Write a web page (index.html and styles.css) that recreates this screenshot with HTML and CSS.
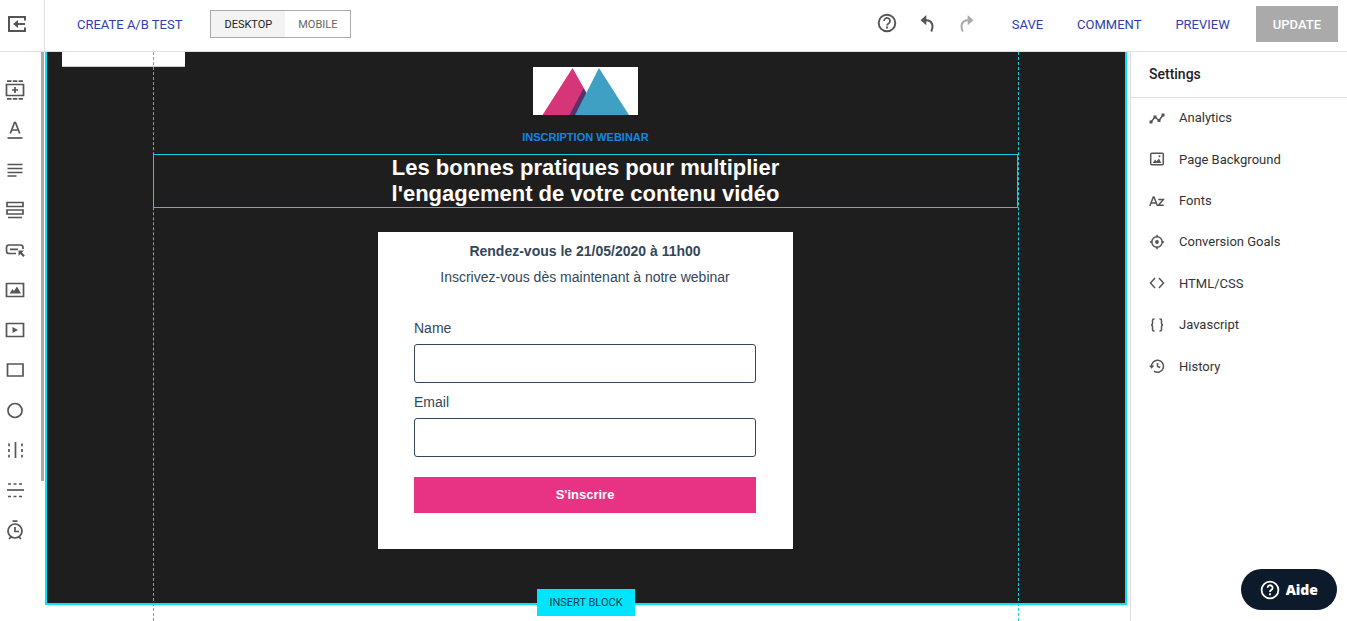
FILE: index.html
```html
<!DOCTYPE html>
<html lang="fr">
<head>
<meta charset="utf-8">
<title>Page editor</title>
<link rel="stylesheet" href="styles.css">
</head>
<body>
<div class="app">
  <header class="topbar">
    <button class="exit" aria-label="Exit">
      <svg width="20" height="18" viewBox="0 0 20 18" fill="none" stroke="#555" stroke-width="2"><path d="M18 5.500V2H2v14h16v-3.500M18 9H8"/><path d="M11 5v8L6 9z" fill="#555" stroke="none"/></svg>
    </button>
    <a class="link ab" href="#">CREATE A/B TEST</a>
    <div class="toggle">
      <button class="toggle-btn active">DESKTOP</button>
      <button class="toggle-btn">MOBILE</button>
    </div>
    <div class="tools">
      <button class="tool" aria-label="Help"><svg width="20" height="20" viewBox="0 0 20 20" fill="none" stroke="#555" stroke-width="1.900"><circle cx="10" cy="10" r="8.300"/><path d="M7 8a3 3 0 1 1 4.600 2.500C10.500 11.200 10 11.600 10 12.500" stroke-width="1.700"/><path d="M10 13.600v1.900" stroke-width="1.900"/></svg></button>
      <button class="tool" aria-label="Undo"><svg width="20" height="20" viewBox="0 0 20 20"><path d="M3.500 7.200L9.300 2v10.200z" fill="#555"/><path d="M8 7.200h1.600c5 0 7.600 5 4.600 11.300" fill="none" stroke="#555" stroke-width="2"/></svg></button>
      <button class="tool" aria-label="Redo"><svg width="20" height="20" viewBox="0 0 20 20"><path d="M16.500 7.200L10.700 2v10.200z" fill="#aaa"/><path d="M12 7.200h-1.600c-5 0-7.600 5-4.600 11.300" fill="none" stroke="#aaa" stroke-width="2"/></svg></button>
    </div>
    <button class="link action">SAVE</button>
    <button class="link action">COMMENT</button>
    <button class="link action">PREVIEW</button>
    <button class="update">UPDATE</button>
  </header>

  <div class="body">
    <nav class="rail" aria-label="Elements">
      <button class="rail-btn" aria-label="Block"><svg viewBox="0 0 20 20"><path d="M1.500 4.500h17v11h-17z"/><path d="M10 7v6M7 10h6"/><path d="M2 1.200h16M2 18.800h16" stroke-dasharray="4.500 1.300"/></svg></button>
      <button class="rail-btn" aria-label="Headline"><svg viewBox="0 0 20 20"><path d="M5.300 13.500L9.500 2.500h1l4.200 11M6.800 10h6.400"/><path d="M2.500 18h15"/></svg></button>
      <button class="rail-btn" aria-label="Text"><svg viewBox="0 0 20 20"><path d="M2.500 4.500h15M2.500 8.500h15M2.500 12.500h15M2.500 16h9"/></svg></button>
      <button class="rail-btn" aria-label="Form"><svg viewBox="0 0 20 20"><path d="M2 2.500h16v4H2zM2 10h16v4H2zM3 17.500h14"/></svg></button>
      <button class="rail-btn" aria-label="Button"><svg viewBox="0 0 20 20"><path d="M11 13.500H4q-2.500 0-2.500-2.500V7.500Q1.500 5 4 5h11.500Q18 5 18 7.500V9M5 9.300h8"/><path d="M13.500 10.500h5.500l-2.100 2.100 2.900 2.900-1.500 1.500-2.900-2.900-1.900 1.900z" class="solid"/></svg></button>
      <button class="rail-btn" aria-label="Image"><svg viewBox="0 0 20 20"><path d="M1.500 3.500h17v13h-17z"/><path d="M4.500 13.500l3-4.500 1.500 2 3-4.500 4 7z" class="solid"/></svg></button>
      <button class="rail-btn" aria-label="Video"><svg viewBox="0 0 20 20"><path d="M1.500 3.500h17v13h-17z"/><path d="M7.500 7l5.500 3-5.500 3z" class="solid"/></svg></button>
      <button class="rail-btn" aria-label="Box"><svg viewBox="0 0 20 20"><path d="M2.500 4h15.500v12H2.500z"/></svg></button>
      <button class="rail-btn" aria-label="Circle"><svg viewBox="0 0 20 20"><circle cx="10" cy="10.500" r="7"/></svg></button>
      <button class="rail-btn" aria-label="Vertical line"><svg viewBox="0 0 20 20"><path d="M10.500 2v16"/><path d="M4 3.500v14M17 3.500v14" stroke-dasharray="2.800 2.800"/></svg></button>
      <button class="rail-btn" aria-label="Horizontal line"><svg viewBox="0 0 20 20"><path d="M2 10h17"/><path d="M3 4h15M3 16.500h15" stroke-dasharray="3 2.500"/></svg></button>
      <button class="rail-btn" aria-label="Timer"><svg viewBox="0 0 20 20"><circle cx="10" cy="11" r="7"/><path d="M7.500 1.200h5M10 7v4.500h4M4 19l2-2M16 19l-2-2"/></svg></button>
      <span class="rail-scroll"></span>
    </nav>

    <main class="canvas">
      <section class="block">
        <div class="column">
          <svg class="logo" width="105" height="48" viewBox="0 0 105 48"><path d="M0 0h105v48H0z" fill="#fff"/><path d="M9.500 48L39.500 1 66 48z" fill="#d63678"/><path d="M50.500 21.500L36.500 48H48l9-15.500z" fill="#583168"/><path d="M42 48L66 1l30 47z" fill="#40a0c4"/></svg>
          <p class="kicker">INSCRIPTION WEBINAR</p>
          <h1 class="headline">Les bonnes pratiques pour multiplier<br>l'engagement de votre contenu vidéo</h1>
          <form class="card">
            <p class="date">Rendez-vous le 21/05/2020 à 11h00</p>
            <p class="intro">Inscrivez-vous dès maintenant à notre webinar</p>
            <label class="label" for="name">Name</label>
            <input class="field" id="name" type="text">
            <label class="label" for="email">Email</label>
            <input class="field" id="email" type="email">
            <button class="submit" type="button">S'inscrire</button>
          </form>
        </div>
        <button class="insert">INSERT BLOCK</button>
      </section>
      <span class="tab"></span>
      <div class="guides"><span class="guide-lines"></span></div>
    </main>

    <aside class="settings">
      <h2 class="settings-title">Settings</h2>
      <ul class="settings-list">
        <li><a class="item" href="#"><svg viewBox="0 0 16 16"><path d="M2 12l4-5 4 3.500L14 5"/><path d="M.5 10.500h3v3h-3zM4.500 5.500h3v3h-3zM8.500 9h3v3h-3zM12.500 3.500h3v3h-3z" class="solid"/></svg>Analytics</a></li>
        <li><a class="item" href="#"><svg viewBox="0 0 16 16"><rect x="1.700" y="2.200" width="12.600" height="11.600" rx="1"/><path d="M3.800 12l2.200-3.500 1.500 1.700L10 7.500l2.200 4.500z" class="solid"/><circle cx="10.500" cy="5.300" r="1" class="solid"/></svg>Page Background</a></li>
        <li><a class="item" href="#"><svg viewBox="0 0 16 16"><path d="M.8 13L4.300 4h.7l3.500 9M2.300 10H7M9.300 6.500h5L9.500 12.300h5.300"/></svg>Fonts</a></li>
        <li><a class="item" href="#"><svg viewBox="0 0 16 16"><circle cx="8" cy="8" r="5.200"/><circle cx="8" cy="8" r="1.900" class="solid"/><path d="M8 .8v2.500M8 12.700v2.500M.8 8h2.500M12.700 8h2.500"/></svg>Conversion Goals</a></li>
        <li><a class="item" href="#"><svg viewBox="0 0 16 16"><path d="M6 3L1.500 8 6 13M10 3l4.500 5-4.500 5"/></svg>HTML/CSS</a></li>
        <li><a class="item" href="#"><svg viewBox="0 0 16 16"><path d="M5.500 2H5Q3.500 2 3.500 3.500V6.500Q3.500 8 2 8Q3.500 8 3.500 9.500V12.500Q3.500 14 5 14h.5M10.500 2h.5q1.500 0 1.500 1.500v3Q12.500 8 14 8q-1.500 0-1.500 1.500v3Q12.500 14 11 14h-.5"/></svg>Javascript</a></li>
        <li><a class="item" href="#"><svg viewBox="0 0 16 16"><path d="M2.500 9A6 6 0 1 1 5 13.200M8.500 5v3.500l2.700 1"/><path d="M0 7.500h5.300L2.600 10.800z" class="solid"/></svg>History</a></li>
      </ul>
    </aside>
  </div>
  <button class="help"><svg width="20" height="20" viewBox="0 0 20 20" fill="none" stroke="#fff" stroke-width="1.800"><circle cx="10" cy="10" r="8.400"/><path d="M7.600 7.700a2.500 2.500 0 1 1 3.800 2.200Q10 10.700 10 12"/><path d="M10 13.300v2"/></svg>Aide</button>
</div>
</body>
</html>
```
FILE: styles.css
```css
* { box-sizing: border-box; }
body { margin: 0; background: #fff; font-family: Roboto, "Liberation Sans", sans-serif; overflow: hidden; }
button { border: 0; background: none; padding: 0; font: inherit; cursor: pointer; }
a { text-decoration: none; }
svg { display: block; }
p, h1, h2, ul { margin: 0; padding: 0; }

.app { display: flex; flex-direction: column; min-height: 100vh; }

.topbar { display: flex; align-items: center; height: 52px; padding-right: 9px; border-bottom: 1px solid #e0e0e0; }
.exit { display: flex; align-items: center; align-self: stretch; width: 45px; padding: 0 0 3px 7px; border-right: 1px solid #e0e0e0; }
.link { padding-bottom: 2px; color: #2f40ac; font-size: 13px; line-height: 20px; }
.ab { margin-left: 32px; }
.toggle { display: flex; height: 28px; margin: 0 auto 3px 28px; border: 1px solid #aaa; }
.toggle-btn { padding: 0 13px; font-size: 11px; color: #666; }
.toggle-btn.active { background: #f3f3f3; color: #222; }
.tools { display: flex; margin-right: 8px; padding-bottom: 5px; }
.tool { display: flex; justify-content: center; width: 40px; }
.action { padding: 0 17px 2px; }
.update { height: 36px; margin: 0 0 3px 9px; padding: 0 17px; background: #aaa; color: #fff; font-size: 13px; font-weight: 500; }

.body { flex: 1; display: grid; grid-template-columns: 45px 1fr 217px; }

.rail { position: relative; display: flex; flex-direction: column; padding-top: 18px; }
.rail-btn { display: flex; align-items: center; justify-content: center; width: 30px; height: 40px; }
.rail-btn svg { width: 20px; height: 20px; fill: none; stroke: #555; stroke-width: 1.7; }
.solid { fill: #555; stroke: none; }
.rail-scroll { position: absolute; right: 1px; top: 0; width: 3px; height: 429px; background: #aaa; }

.canvas { position: relative; padding-right: 3px; }
.block { position: relative; padding: 15px 0 54px; border: solid #00e5ff; border-width: 0 2px 2px; background: #1e1e1e; }
.column { display: flex; flex-direction: column; align-items: center; max-width: 866px; margin: 0 auto; padding-right: 1px; }
.kicker { margin: 12px 0 7px; font: bold 11px/20px "Liberation Sans", Arial, sans-serif; color: #1187e0; }
.headline { width: 100%; border: 1px solid #17cfe0; color: #fff; text-align: center; font: bold 22px/26px "Liberation Sans", Arial, sans-serif; }
.card { display: flex; flex-direction: column; width: 415px; margin-top: 24px; padding: 6px 37px 36px 36px; background: #fff; color: #33475b; font: 14px/26px "Liberation Sans", Arial, sans-serif; }
.date { text-align: center; font-weight: bold; }
.intro { margin-bottom: 26px; text-align: center; }
.label { line-height: 24px; margin-bottom: 4px; }
.field { width: 100%; height: 39px; margin-bottom: 7px; padding: 0 10px; border: 1px solid #33475b; border-radius: 3px; background: #fff; font: inherit; }
.submit { height: 36px; margin-top: 13px; background: #e83284; color: #fff; font-weight: bold; font-size: 13px; }
.insert { position: absolute; left: 50%; bottom: -13px; z-index: 1; width: 98px; height: 27px; transform: translateX(-50%); background: #00e5ff; color: #113844; font-size: 11px; }
.tab { position: absolute; left: 17px; top: 0; width: 123px; height: 15px; background: #fff; border-bottom: 1px solid #ccc; }
.guides { position: absolute; inset: 0 3px 0 0; display: flex; justify-content: center; pointer-events: none; }
.guide-lines { width: 866px; border: dashed #17cfe0; border-width: 0 1px; }

.settings { border-left: 1px solid #e0e0e0; }
.settings-title { padding: 0 18px; border-bottom: 1px solid #e0e0e0; color: #222; font-size: 14px; font-weight: 500; line-height: 45px; }
.settings-list { display: grid; grid-auto-rows: 1fr; height: 290px; list-style: none; }
.item { display: flex; align-items: center; gap: 14px; height: 100%; padding: 0 18px 2px; color: #333; font-size: 13px; }
.item svg { width: 16px; height: 16px; fill: none; stroke: #555; stroke-width: 1.5; }

.help { position: fixed; right: 10px; bottom: 11px; display: flex; align-items: center; gap: 6px; height: 41px; padding: 0 19px; border-radius: 21px; background: #0c1a2c; color: #fff; font: 800 14px/20px "Open Sans", "Noto Sans", sans-serif; }
```
